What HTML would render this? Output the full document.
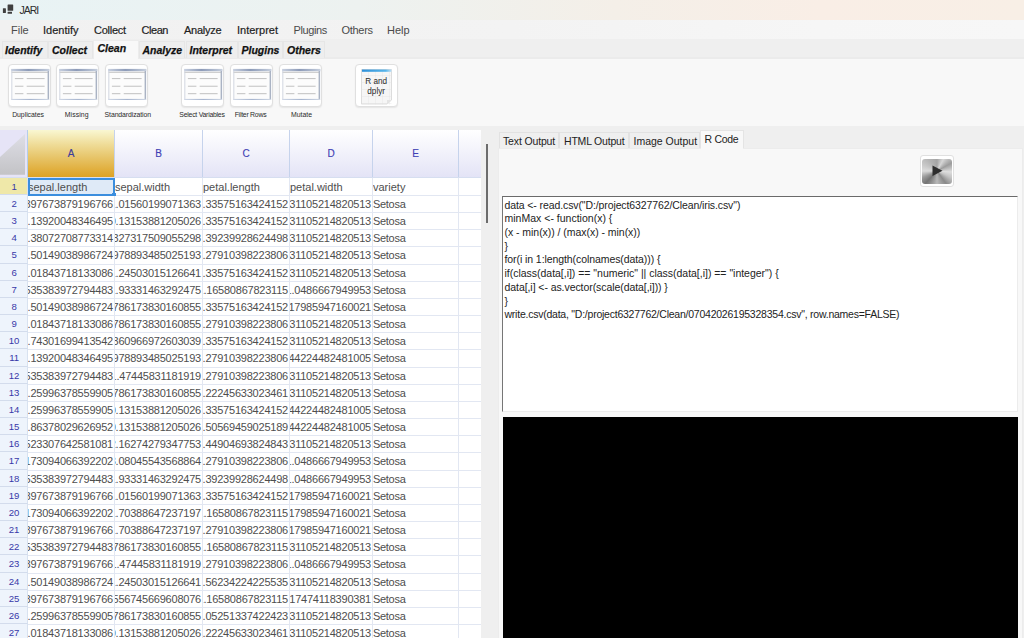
<!DOCTYPE html>
<html><head><meta charset="utf-8">
<style>
*{box-sizing:border-box}
html,body{margin:0;padding:0}
body{width:1024px;height:638px;overflow:hidden;position:relative;background:#efefef;font-family:"Liberation Sans",sans-serif;color:#222}
.a{position:absolute}
#title{left:0;top:0;width:1024px;height:20px;background:linear-gradient(90deg,#e8f3f5 0%,#edf2f0 35%,#f4efe8 60%,#f9eee6 80%,#f8efe6 100%)}
#title .t{position:absolute;left:19.5px;top:3.8px;font-size:10.5px;line-height:12px;letter-spacing:-1px;color:#2e2e2e}
#menu{left:0;top:20px;width:1024px;height:20px;background:linear-gradient(90deg,#f1f1f1,#f3f3f3 50%,#f6f6f6 80%,#f7f7f7)}
.mi{position:absolute;top:3px;font-size:11px;line-height:14px;color:#1e1e1e;-webkit-text-stroke:0.2px #1e1e1e}
.mi.lt{color:#4a4a4a;-webkit-text-stroke:0}
#tabs{left:0;top:39px;width:1024px;height:20px;background:linear-gradient(#efefef 0,#efefef 18px,#ebebeb 18px)}
.tb{position:absolute;top:2px;height:17px;background:#eeeeee;border:1px solid #e6e6e6;border-bottom:none}
.tb.sel{top:1px;height:19px;background:#f8f8f8;border-color:#ececec}
.tt{position:absolute;top:5px;-webkit-text-stroke:0.25px #111;font-size:10.5px;line-height:12px;font-weight:bold;font-style:italic;color:#111}
#ribbon{left:0;top:59px;width:1024px;height:67px;background:#f8f8f8}
.btn{position:absolute;top:5.2px;width:43px;height:42.5px;background:#fff;border:1px solid #e0e0e0;border-radius:4px;box-shadow:0 1px 1.5px rgba(0,0,0,0.08)}
.ico{position:absolute;left:2.5px;top:3.5px;width:38px;height:32px;background:linear-gradient(#fafafa,#f2f2f2);border:1px solid #c5cbd6;border-top:none}
.ico .bar{position:absolute;left:-1px;top:0;width:38px;height:3px;background:linear-gradient(90deg,#aab4c8,#8c9ab4 50%,#aab4c8)}
.ico .d{position:absolute;height:1px;background:#c8c8c8}
.lbl{position:absolute;top:51px;width:80px;text-align:center;font-size:6.9px;line-height:9px;color:#2a2a2a;letter-spacing:-0.25px;white-space:nowrap}
#tbl{left:0;top:130px;width:481px;height:508px;background:#fff;overflow:hidden}
.hl{position:absolute;left:28px;width:453px;height:1px;background:#e2e7f2}
.vl{position:absolute;top:178px;width:1px;height:460px;background:#e2e7f2}
.rn{position:absolute;left:0;width:28px;background:#eef4fc;border-bottom:1px solid #d3dcec;border-right:1px solid #d8e2f0;text-align:center;font-size:9.6px;letter-spacing:-0.2px;color:#3838a8;padding-top:2.5px;padding-left:1px;line-height:11px}
.rn.sel{background:#efe8a9}
.c{position:absolute;overflow:hidden;white-space:nowrap;font-size:11px;color:#4e4e4e;display:flex;align-items:center}
.c.r{justify-content:flex-end;padding-right:1px;letter-spacing:-0.22px}
.c.l{justify-content:flex-start;padding-left:0}
.c.s{letter-spacing:-0.3px}
.c span{flex:none;line-height:13px;padding-top:1px}
.cl{position:absolute;left:0;font-size:10.5px;line-height:13px;white-space:pre;color:#222}
.tabt{white-space:nowrap;line-height:13px}
.hdr{line-height:12px}
</style></head><body>
<div id="title" class="a">
 <svg class="a" style="left:2px;top:4px" width="13" height="11" viewBox="0 0 13 11"><rect x="5.6" y="0.4" width="5.6" height="6.4" fill="#3f3f3f" rx="0.6"/><rect x="0.9" y="4.2" width="3" height="4.7" fill="#3f3f3f" rx="0.5"/><rect x="5.6" y="7.7" width="4.4" height="2.1" fill="#3f3f3f" rx="0.4"/></svg>
 <div class="t">JARI</div>
</div>
<div id="menu" class="a">
 <div class="mi lt" style="left:11px">File</div>
 <div class="mi" style="left:43px">Identify</div>
 <div class="mi" style="left:94px;letter-spacing:-0.25px">Collect</div>
 <div class="mi" style="left:141.5px;letter-spacing:-0.45px">Clean</div>
 <div class="mi" style="left:184px;letter-spacing:-0.25px">Analyze</div>
 <div class="mi" style="left:237px">Interpret</div>
 <div class="mi lt" style="left:293.5px;letter-spacing:-0.4px">Plugins</div>
 <div class="mi lt" style="left:341.5px;letter-spacing:-0.3px">Others</div>
 <div class="mi lt" style="left:387px">Help</div>
</div>
<div id="tabs" class="a">
 <div class="tb" style="left:2px;width:45.5px"></div>
 <div class="tb" style="left:47.5px;width:45px"></div>
 <div class="tb sel" style="left:92.7px;width:46.6px"></div>
 <div class="tb" style="left:139.3px;width:46.2px"></div>
 <div class="tb" style="left:185.5px;width:52px"></div>
 <div class="tb" style="left:237.5px;width:45.5px"></div>
 <div class="tb" style="left:283px;width:42.4px"></div>
 <div class="tt" style="left:5px">Identify</div>
 <div class="tt" style="left:52px">Collect</div>
 <div class="tt" style="left:97.5px;top:3.3px">Clean</div>
 <div class="tt" style="left:142.5px">Analyze</div>
 <div class="tt" style="left:189.5px">Interpret</div>
 <div class="tt" style="left:241.5px">Plugins</div>
 <div class="tt" style="left:287px">Others</div>
</div>
<div id="ribbon" class="a">
<div class="btn" style="left:7.5px"><svg class="a" style="left:0;top:0" width="41" height="41" viewBox="0 0 41 41"><defs><linearGradient id="tb7" x1="0" x2="1"><stop offset="0" stop-color="#c9d1e0"/><stop offset="0.45" stop-color="#8d9bb8"/><stop offset="0.85" stop-color="#b4bfd2"/><stop offset="1" stop-color="#c8d0de"/></linearGradient><linearGradient id="bb7" x1="0" x2="1"><stop offset="0" stop-color="#d0d8e6"/><stop offset="0.5" stop-color="#a8b6cf"/><stop offset="1" stop-color="#cfd7e4"/></linearGradient></defs><rect x="2.5" y="4" width="37.5" height="31" fill="#fcfcfc"/><rect x="2.1" y="3.9" width="38.4" height="2.3" fill="url(#tb7)"/><rect x="2.5" y="6.8" width="37.5" height="1" fill="#c4c4c4"/><rect x="2.4" y="6" width="0.9" height="29" fill="#cdd3de"/><rect x="38.6" y="6" width="1.5" height="29" fill="#aab3c4"/><rect x="2.4" y="33.9" width="37.7" height="1.1" fill="url(#bb7)"/><g fill="#c6c6c6"><rect x="5.9" y="13" width="8.5" height="1.1"/><rect x="17.7" y="13" width="17.9" height="1.1"/><rect x="5.9" y="20.7" width="8.5" height="1.1"/><rect x="17.7" y="20.7" width="17.9" height="1.1"/><rect x="5.9" y="28.1" width="8.5" height="1.1"/><rect x="17.7" y="28.1" width="17.9" height="1.1"/></g></svg></div><div class="lbl" style="left:-12px;letter-spacing:-0.05px">Duplicates</div><div class="btn" style="left:56px"><svg class="a" style="left:0;top:0" width="41" height="41" viewBox="0 0 41 41"><defs><linearGradient id="tb56" x1="0" x2="1"><stop offset="0" stop-color="#c9d1e0"/><stop offset="0.45" stop-color="#8d9bb8"/><stop offset="0.85" stop-color="#b4bfd2"/><stop offset="1" stop-color="#c8d0de"/></linearGradient><linearGradient id="bb56" x1="0" x2="1"><stop offset="0" stop-color="#d0d8e6"/><stop offset="0.5" stop-color="#a8b6cf"/><stop offset="1" stop-color="#cfd7e4"/></linearGradient></defs><rect x="2.5" y="4" width="37.5" height="31" fill="#fcfcfc"/><rect x="2.1" y="3.9" width="38.4" height="2.3" fill="url(#tb56)"/><rect x="2.5" y="6.8" width="37.5" height="1" fill="#c4c4c4"/><rect x="2.4" y="6" width="0.9" height="29" fill="#cdd3de"/><rect x="38.6" y="6" width="1.5" height="29" fill="#aab3c4"/><rect x="2.4" y="33.9" width="37.7" height="1.1" fill="url(#bb56)"/><g fill="#c6c6c6"><rect x="5.9" y="13" width="8.5" height="1.1"/><rect x="17.7" y="13" width="17.9" height="1.1"/><rect x="5.9" y="20.7" width="8.5" height="1.1"/><rect x="17.7" y="20.7" width="17.9" height="1.1"/><rect x="5.9" y="28.1" width="8.5" height="1.1"/><rect x="17.7" y="28.1" width="17.9" height="1.1"/></g></svg></div><div class="lbl" style="left:36.7px;letter-spacing:0.05px">Missing</div><div class="btn" style="left:104.8px"><svg class="a" style="left:0;top:0" width="41" height="41" viewBox="0 0 41 41"><defs><linearGradient id="tb104" x1="0" x2="1"><stop offset="0" stop-color="#c9d1e0"/><stop offset="0.45" stop-color="#8d9bb8"/><stop offset="0.85" stop-color="#b4bfd2"/><stop offset="1" stop-color="#c8d0de"/></linearGradient><linearGradient id="bb104" x1="0" x2="1"><stop offset="0" stop-color="#d0d8e6"/><stop offset="0.5" stop-color="#a8b6cf"/><stop offset="1" stop-color="#cfd7e4"/></linearGradient></defs><rect x="2.5" y="4" width="37.5" height="31" fill="#fcfcfc"/><rect x="2.1" y="3.9" width="38.4" height="2.3" fill="url(#tb104)"/><rect x="2.5" y="6.8" width="37.5" height="1" fill="#c4c4c4"/><rect x="2.4" y="6" width="0.9" height="29" fill="#cdd3de"/><rect x="38.6" y="6" width="1.5" height="29" fill="#aab3c4"/><rect x="2.4" y="33.9" width="37.7" height="1.1" fill="url(#bb104)"/><g fill="#c6c6c6"><rect x="5.9" y="13" width="8.5" height="1.1"/><rect x="17.7" y="13" width="17.9" height="1.1"/><rect x="5.9" y="20.7" width="8.5" height="1.1"/><rect x="17.7" y="20.7" width="17.9" height="1.1"/><rect x="5.9" y="28.1" width="8.5" height="1.1"/><rect x="17.7" y="28.1" width="17.9" height="1.1"/></g></svg></div><div class="lbl" style="left:87.8px;letter-spacing:-0.1px">Standardization</div><div class="btn" style="left:181.3px"><svg class="a" style="left:0;top:0" width="41" height="41" viewBox="0 0 41 41"><defs><linearGradient id="tb181" x1="0" x2="1"><stop offset="0" stop-color="#c9d1e0"/><stop offset="0.45" stop-color="#8d9bb8"/><stop offset="0.85" stop-color="#b4bfd2"/><stop offset="1" stop-color="#c8d0de"/></linearGradient><linearGradient id="bb181" x1="0" x2="1"><stop offset="0" stop-color="#d0d8e6"/><stop offset="0.5" stop-color="#a8b6cf"/><stop offset="1" stop-color="#cfd7e4"/></linearGradient></defs><rect x="2.5" y="4" width="37.5" height="31" fill="#fcfcfc"/><rect x="2.1" y="3.9" width="38.4" height="2.3" fill="url(#tb181)"/><rect x="2.5" y="6.8" width="37.5" height="1" fill="#c4c4c4"/><rect x="2.4" y="6" width="0.9" height="29" fill="#cdd3de"/><rect x="38.6" y="6" width="1.5" height="29" fill="#aab3c4"/><rect x="2.4" y="33.9" width="37.7" height="1.1" fill="url(#bb181)"/><g fill="#c6c6c6"><rect x="5.9" y="13" width="8.5" height="1.1"/><rect x="17.7" y="13" width="17.9" height="1.1"/><rect x="5.9" y="20.7" width="8.5" height="1.1"/><rect x="17.7" y="20.7" width="17.9" height="1.1"/><rect x="5.9" y="28.1" width="8.5" height="1.1"/><rect x="17.7" y="28.1" width="17.9" height="1.1"/></g></svg></div><div class="lbl" style="left:162px;letter-spacing:-0.25px">Select Variables</div><div class="btn" style="left:230.2px"><svg class="a" style="left:0;top:0" width="41" height="41" viewBox="0 0 41 41"><defs><linearGradient id="tb230" x1="0" x2="1"><stop offset="0" stop-color="#c9d1e0"/><stop offset="0.45" stop-color="#8d9bb8"/><stop offset="0.85" stop-color="#b4bfd2"/><stop offset="1" stop-color="#c8d0de"/></linearGradient><linearGradient id="bb230" x1="0" x2="1"><stop offset="0" stop-color="#d0d8e6"/><stop offset="0.5" stop-color="#a8b6cf"/><stop offset="1" stop-color="#cfd7e4"/></linearGradient></defs><rect x="2.5" y="4" width="37.5" height="31" fill="#fcfcfc"/><rect x="2.1" y="3.9" width="38.4" height="2.3" fill="url(#tb230)"/><rect x="2.5" y="6.8" width="37.5" height="1" fill="#c4c4c4"/><rect x="2.4" y="6" width="0.9" height="29" fill="#cdd3de"/><rect x="38.6" y="6" width="1.5" height="29" fill="#aab3c4"/><rect x="2.4" y="33.9" width="37.7" height="1.1" fill="url(#bb230)"/><g fill="#c6c6c6"><rect x="5.9" y="13" width="8.5" height="1.1"/><rect x="17.7" y="13" width="17.9" height="1.1"/><rect x="5.9" y="20.7" width="8.5" height="1.1"/><rect x="17.7" y="20.7" width="17.9" height="1.1"/><rect x="5.9" y="28.1" width="8.5" height="1.1"/><rect x="17.7" y="28.1" width="17.9" height="1.1"/></g></svg></div><div class="lbl" style="left:210.5px;letter-spacing:-0.25px">Filter Rows</div><div class="btn" style="left:279px"><svg class="a" style="left:0;top:0" width="41" height="41" viewBox="0 0 41 41"><defs><linearGradient id="tb279" x1="0" x2="1"><stop offset="0" stop-color="#c9d1e0"/><stop offset="0.45" stop-color="#8d9bb8"/><stop offset="0.85" stop-color="#b4bfd2"/><stop offset="1" stop-color="#c8d0de"/></linearGradient><linearGradient id="bb279" x1="0" x2="1"><stop offset="0" stop-color="#d0d8e6"/><stop offset="0.5" stop-color="#a8b6cf"/><stop offset="1" stop-color="#cfd7e4"/></linearGradient></defs><rect x="2.5" y="4" width="37.5" height="31" fill="#fcfcfc"/><rect x="2.1" y="3.9" width="38.4" height="2.3" fill="url(#tb279)"/><rect x="2.5" y="6.8" width="37.5" height="1" fill="#c4c4c4"/><rect x="2.4" y="6" width="0.9" height="29" fill="#cdd3de"/><rect x="38.6" y="6" width="1.5" height="29" fill="#aab3c4"/><rect x="2.4" y="33.9" width="37.7" height="1.1" fill="url(#bb279)"/><g fill="#c6c6c6"><rect x="5.9" y="13" width="8.5" height="1.1"/><rect x="17.7" y="13" width="17.9" height="1.1"/><rect x="5.9" y="20.7" width="8.5" height="1.1"/><rect x="17.7" y="20.7" width="17.9" height="1.1"/><rect x="5.9" y="28.1" width="8.5" height="1.1"/><rect x="17.7" y="28.1" width="17.9" height="1.1"/></g></svg></div><div class="lbl" style="left:261.5px;letter-spacing:0px">Mutate</div>
 <div class="btn" style="left:354.5px">
  <svg class="a" style="left:5.2px;top:2.7px" width="31" height="37" viewBox="0 0 31 37">
   <defs><pattern id="g" width="7" height="7" patternUnits="userSpaceOnUse" x="1" y="1"><path d="M7 0V7M0 7H7" stroke="#e2e2e2" stroke-width="0.7" fill="none"/></pattern>
   <linearGradient id="bl" x1="0" x2="1"><stop offset="0" stop-color="#2e90d8"/><stop offset="0.8" stop-color="#56b4ea"/><stop offset="1" stop-color="#bfe0f5"/></linearGradient></defs>
   <path d="M0.5 1.5H30.5V32L26 36H0.5Z" fill="#f6f6f6" stroke="#d4d4d4" stroke-width="0.8"/>
   <rect x="0.5" y="1.5" width="30" height="35" fill="url(#g)" clip-path="none"/>
   <path d="M26 36L30.5 32H26Z" fill="#e4e4e4"/>
   <rect x="1" y="1.5" width="29.5" height="2.3" fill="url(#bl)"/>
   <text x="15.2" y="15.8" text-anchor="middle" font-family="Liberation Sans" font-size="8.2" fill="#2a2a2a">R and</text>
   <text x="15.2" y="25.6" text-anchor="middle" font-family="Liberation Sans" font-size="8.2" fill="#2a2a2a">dplyr</text>
  </svg>
 </div>
</div>
<div id="tbl" class="a">
 <div class="a" style="left:0;top:0;width:481px;height:48px;background:linear-gradient(#ffffff,#e3e3f6)"></div>
 <div class="a" style="left:28px;top:0;width:87px;height:48px;background:linear-gradient(#f9f7d2,#efdc98 30%,#e6c264 60%,#dda020)"></div>
 <div class="a" style="left:0;top:0;width:28px;height:48px;background:#e6e4f7"></div>
 <svg class="a" style="left:0;top:0" width="28" height="48"><defs><linearGradient id="tri" x1="0" y1="0" x2="0" y2="1"><stop offset="0" stop-color="#dedee6"/><stop offset="1" stop-color="#c3c3c6"/></linearGradient></defs><path d="M0 44.7H25V4L0 27Z" fill="url(#tri)"/></svg>
 <div class="a" style="left:114px;top:0;width:1px;height:48px;background:#c6d3ec"></div>
 <div class="a" style="left:202px;top:0;width:1px;height:48px;background:#c6d3ec"></div>
 <div class="a" style="left:289px;top:0;width:1px;height:48px;background:#c6d3ec"></div>
 <div class="a" style="left:372px;top:0;width:1px;height:48px;background:#c6d3ec"></div>
 <div class="a" style="left:458px;top:0;width:1px;height:48px;background:#c6d3ec"></div>
 <div class="a" style="left:27px;top:0;width:1px;height:48px;background:#b4cdea"></div>
 <div class="a hdr" style="left:28px;top:18.2px;width:86px;text-align:center;font-size:10px;color:#3c3c9c;-webkit-text-stroke:0.15px #3c3c9c">A</div>
 <div class="a hdr" style="left:115px;top:18.2px;width:87px;text-align:center;font-size:10px;color:#4040b4;-webkit-text-stroke:0.15px #4040b4">B</div>
 <div class="a hdr" style="left:203px;top:18.2px;width:86px;text-align:center;font-size:10px;color:#4040b4;-webkit-text-stroke:0.15px #4040b4">C</div>
 <div class="a hdr" style="left:290px;top:18.2px;width:82px;text-align:center;font-size:10px;color:#4040b4;-webkit-text-stroke:0.15px #4040b4">D</div>
 <div class="a hdr" style="left:373px;top:18.2px;width:85px;text-align:center;font-size:10px;color:#4040b4;-webkit-text-stroke:0.15px #4040b4">E</div>
 <div class="a" style="left:0;top:47px;width:481px;height:1px;background:#d6def0"></div>
 <div class="a" style="top:-130px;left:0">
 <div class="a" style="left:28px;top:178px;width:87px;height:17px;background:#dfeaf7"></div>
 <div class="rn sel" style="top:178px;height:17px">1</div><div class="rn" style="top:195px;height:17px">2</div><div class="rn" style="top:212px;height:17px">3</div><div class="rn" style="top:229px;height:17px">4</div><div class="rn" style="top:246px;height:18px">5</div><div class="rn" style="top:264px;height:17px">6</div><div class="rn" style="top:281px;height:17px">7</div><div class="rn" style="top:298px;height:17px">8</div><div class="rn" style="top:315px;height:17px">9</div><div class="rn" style="top:332px;height:17px">10</div><div class="rn" style="top:349px;height:18px">11</div><div class="rn" style="top:367px;height:17px">12</div><div class="rn" style="top:384px;height:17px">13</div><div class="rn" style="top:401px;height:17px">14</div><div class="rn" style="top:418px;height:17px">15</div><div class="rn" style="top:435px;height:17px">16</div><div class="rn" style="top:452px;height:18px">17</div><div class="rn" style="top:470px;height:17px">18</div><div class="rn" style="top:487px;height:17px">19</div><div class="rn" style="top:504px;height:17px">20</div><div class="rn" style="top:521px;height:17px">21</div><div class="rn" style="top:538px;height:17px">22</div><div class="rn" style="top:555px;height:18px">23</div><div class="rn" style="top:573px;height:17px">24</div><div class="rn" style="top:590px;height:17px">25</div><div class="rn" style="top:607px;height:17px">26</div><div class="rn" style="top:624px;height:17px">27</div>
 <div class="hl" style="top:195px"></div><div class="hl" style="top:212px"></div><div class="hl" style="top:229px"></div><div class="hl" style="top:246px"></div><div class="hl" style="top:264px"></div><div class="hl" style="top:281px"></div><div class="hl" style="top:298px"></div><div class="hl" style="top:315px"></div><div class="hl" style="top:332px"></div><div class="hl" style="top:349px"></div><div class="hl" style="top:367px"></div><div class="hl" style="top:384px"></div><div class="hl" style="top:401px"></div><div class="hl" style="top:418px"></div><div class="hl" style="top:435px"></div><div class="hl" style="top:452px"></div><div class="hl" style="top:470px"></div><div class="hl" style="top:487px"></div><div class="hl" style="top:504px"></div><div class="hl" style="top:521px"></div><div class="hl" style="top:538px"></div><div class="hl" style="top:555px"></div><div class="hl" style="top:573px"></div><div class="hl" style="top:590px"></div><div class="hl" style="top:607px"></div><div class="hl" style="top:624px"></div><div class="hl" style="top:641px"></div><div class="vl" style="left:114px"></div><div class="vl" style="left:202px"></div><div class="vl" style="left:289px"></div><div class="vl" style="left:372px"></div><div class="vl" style="left:458px"></div>
 <div class="c l" style="top:178px;left:28px;width:86px;height:17px"><span>sepal.length</span></div><div class="c l" style="top:178px;left:115px;width:87px;height:17px"><span>sepal.width</span></div><div class="c l" style="top:178px;left:203px;width:86px;height:17px"><span>petal.length</span></div><div class="c l" style="top:178px;left:290px;width:82px;height:17px"><span>petal.width</span></div><div class="c l" style="top:178px;left:373px;width:85px;height:17px"><span>variety</span></div><div class="c r" style="top:195px;left:28px;width:86px;height:17px"><span>-0.897673879196766</span></div><div class="c r" style="top:195px;left:115px;width:87px;height:17px"><span>1.01560199071363</span></div><div class="c r" style="top:195px;left:203px;width:86px;height:17px"><span>-1.33575163424152</span></div><div class="c r" style="top:195px;left:290px;width:82px;height:17px"><span>-1.31105214820513</span></div><div class="c l s" style="top:195px;left:373px;width:85px;height:17px"><span>Setosa</span></div><div class="c r" style="top:212px;left:28px;width:86px;height:17px"><span>-1.13920048346495</span></div><div class="c r" style="top:212px;left:115px;width:87px;height:17px"><span>-0.13153881205026</span></div><div class="c r" style="top:212px;left:203px;width:86px;height:17px"><span>-1.33575163424152</span></div><div class="c r" style="top:212px;left:290px;width:82px;height:17px"><span>-1.31105214820513</span></div><div class="c l s" style="top:212px;left:373px;width:85px;height:17px"><span>Setosa</span></div><div class="c r" style="top:229px;left:28px;width:86px;height:17px"><span>-1.38072708773314</span></div><div class="c r" style="top:229px;left:115px;width:87px;height:17px"><span>0.327317509055298</span></div><div class="c r" style="top:229px;left:203px;width:86px;height:17px"><span>-1.39239928624498</span></div><div class="c r" style="top:229px;left:290px;width:82px;height:17px"><span>-1.31105214820513</span></div><div class="c l s" style="top:229px;left:373px;width:85px;height:17px"><span>Setosa</span></div><div class="c r" style="top:246px;left:28px;width:86px;height:18px"><span>-1.50149038986724</span></div><div class="c r" style="top:246px;left:115px;width:87px;height:18px"><span>0.0978893485025193</span></div><div class="c r" style="top:246px;left:203px;width:86px;height:18px"><span>-1.27910398223806</span></div><div class="c r" style="top:246px;left:290px;width:82px;height:18px"><span>-1.31105214820513</span></div><div class="c l s" style="top:246px;left:373px;width:85px;height:18px"><span>Setosa</span></div><div class="c r" style="top:264px;left:28px;width:86px;height:17px"><span>-1.01843718133086</span></div><div class="c r" style="top:264px;left:115px;width:87px;height:17px"><span>1.24503015126641</span></div><div class="c r" style="top:264px;left:203px;width:86px;height:17px"><span>-1.33575163424152</span></div><div class="c r" style="top:264px;left:290px;width:82px;height:17px"><span>-1.31105214820513</span></div><div class="c l s" style="top:264px;left:373px;width:85px;height:17px"><span>Setosa</span></div><div class="c r" style="top:281px;left:28px;width:86px;height:17px"><span>-0.535383972794483</span></div><div class="c r" style="top:281px;left:115px;width:87px;height:17px"><span>1.93331463292475</span></div><div class="c r" style="top:281px;left:203px;width:86px;height:17px"><span>-1.16580867823115</span></div><div class="c r" style="top:281px;left:290px;width:82px;height:17px"><span>-1.0486667949953</span></div><div class="c l s" style="top:281px;left:373px;width:85px;height:17px"><span>Setosa</span></div><div class="c r" style="top:298px;left:28px;width:86px;height:17px"><span>-1.50149038986724</span></div><div class="c r" style="top:298px;left:115px;width:87px;height:17px"><span>0.786173830160855</span></div><div class="c r" style="top:298px;left:203px;width:86px;height:17px"><span>-1.33575163424152</span></div><div class="c r" style="top:298px;left:290px;width:82px;height:17px"><span>-1.17985947160021</span></div><div class="c l s" style="top:298px;left:373px;width:85px;height:17px"><span>Setosa</span></div><div class="c r" style="top:315px;left:28px;width:86px;height:17px"><span>-1.01843718133086</span></div><div class="c r" style="top:315px;left:115px;width:87px;height:17px"><span>0.786173830160855</span></div><div class="c r" style="top:315px;left:203px;width:86px;height:17px"><span>-1.27910398223806</span></div><div class="c r" style="top:315px;left:290px;width:82px;height:17px"><span>-1.31105214820513</span></div><div class="c l s" style="top:315px;left:373px;width:85px;height:17px"><span>Setosa</span></div><div class="c r" style="top:332px;left:28px;width:86px;height:17px"><span>-1.74301699413542</span></div><div class="c r" style="top:332px;left:115px;width:87px;height:17px"><span>-0.360966972603039</span></div><div class="c r" style="top:332px;left:203px;width:86px;height:17px"><span>-1.33575163424152</span></div><div class="c r" style="top:332px;left:290px;width:82px;height:17px"><span>-1.31105214820513</span></div><div class="c l s" style="top:332px;left:373px;width:85px;height:17px"><span>Setosa</span></div><div class="c r" style="top:349px;left:28px;width:86px;height:18px"><span>-1.13920048346495</span></div><div class="c r" style="top:349px;left:115px;width:87px;height:18px"><span>0.0978893485025193</span></div><div class="c r" style="top:349px;left:203px;width:86px;height:18px"><span>-1.27910398223806</span></div><div class="c r" style="top:349px;left:290px;width:82px;height:18px"><span>-1.44224482481005</span></div><div class="c l s" style="top:349px;left:373px;width:85px;height:18px"><span>Setosa</span></div><div class="c r" style="top:367px;left:28px;width:86px;height:17px"><span>-0.535383972794483</span></div><div class="c r" style="top:367px;left:115px;width:87px;height:17px"><span>1.47445831181919</span></div><div class="c r" style="top:367px;left:203px;width:86px;height:17px"><span>-1.27910398223806</span></div><div class="c r" style="top:367px;left:290px;width:82px;height:17px"><span>-1.31105214820513</span></div><div class="c l s" style="top:367px;left:373px;width:85px;height:17px"><span>Setosa</span></div><div class="c r" style="top:384px;left:28px;width:86px;height:17px"><span>-1.25996378559905</span></div><div class="c r" style="top:384px;left:115px;width:87px;height:17px"><span>0.786173830160855</span></div><div class="c r" style="top:384px;left:203px;width:86px;height:17px"><span>-1.22245633023461</span></div><div class="c r" style="top:384px;left:290px;width:82px;height:17px"><span>-1.31105214820513</span></div><div class="c l s" style="top:384px;left:373px;width:85px;height:17px"><span>Setosa</span></div><div class="c r" style="top:401px;left:28px;width:86px;height:17px"><span>-1.25996378559905</span></div><div class="c r" style="top:401px;left:115px;width:87px;height:17px"><span>-0.13153881205026</span></div><div class="c r" style="top:401px;left:203px;width:86px;height:17px"><span>-1.33575163424152</span></div><div class="c r" style="top:401px;left:290px;width:82px;height:17px"><span>-1.44224482481005</span></div><div class="c l s" style="top:401px;left:373px;width:85px;height:17px"><span>Setosa</span></div><div class="c r" style="top:418px;left:28px;width:86px;height:17px"><span>-1.86378029626952</span></div><div class="c r" style="top:418px;left:115px;width:87px;height:17px"><span>-0.13153881205026</span></div><div class="c r" style="top:418px;left:203px;width:86px;height:17px"><span>-1.50569459025189</span></div><div class="c r" style="top:418px;left:290px;width:82px;height:17px"><span>-1.44224482481005</span></div><div class="c l s" style="top:418px;left:373px;width:85px;height:17px"><span>Setosa</span></div><div class="c r" style="top:435px;left:28px;width:86px;height:17px"><span>-0.0523307642581081</span></div><div class="c r" style="top:435px;left:115px;width:87px;height:17px"><span>2.16274279347753</span></div><div class="c r" style="top:435px;left:203px;width:86px;height:17px"><span>-1.44904693824843</span></div><div class="c r" style="top:435px;left:290px;width:82px;height:17px"><span>-1.31105214820513</span></div><div class="c l s" style="top:435px;left:373px;width:85px;height:17px"><span>Setosa</span></div><div class="c r" style="top:452px;left:28px;width:86px;height:18px"><span>-0.173094066392202</span></div><div class="c r" style="top:452px;left:115px;width:87px;height:18px"><span>3.08045543568864</span></div><div class="c r" style="top:452px;left:203px;width:86px;height:18px"><span>-1.27910398223806</span></div><div class="c r" style="top:452px;left:290px;width:82px;height:18px"><span>-1.0486667949953</span></div><div class="c l s" style="top:452px;left:373px;width:85px;height:18px"><span>Setosa</span></div><div class="c r" style="top:470px;left:28px;width:86px;height:17px"><span>-0.535383972794483</span></div><div class="c r" style="top:470px;left:115px;width:87px;height:17px"><span>1.93331463292475</span></div><div class="c r" style="top:470px;left:203px;width:86px;height:17px"><span>-1.39239928624498</span></div><div class="c r" style="top:470px;left:290px;width:82px;height:17px"><span>-1.0486667949953</span></div><div class="c l s" style="top:470px;left:373px;width:85px;height:17px"><span>Setosa</span></div><div class="c r" style="top:487px;left:28px;width:86px;height:17px"><span>-0.897673879196766</span></div><div class="c r" style="top:487px;left:115px;width:87px;height:17px"><span>1.01560199071363</span></div><div class="c r" style="top:487px;left:203px;width:86px;height:17px"><span>-1.33575163424152</span></div><div class="c r" style="top:487px;left:290px;width:82px;height:17px"><span>-1.17985947160021</span></div><div class="c l s" style="top:487px;left:373px;width:85px;height:17px"><span>Setosa</span></div><div class="c r" style="top:504px;left:28px;width:86px;height:17px"><span>-0.173094066392202</span></div><div class="c r" style="top:504px;left:115px;width:87px;height:17px"><span>1.70388647237197</span></div><div class="c r" style="top:504px;left:203px;width:86px;height:17px"><span>-1.16580867823115</span></div><div class="c r" style="top:504px;left:290px;width:82px;height:17px"><span>-1.17985947160021</span></div><div class="c l s" style="top:504px;left:373px;width:85px;height:17px"><span>Setosa</span></div><div class="c r" style="top:521px;left:28px;width:86px;height:17px"><span>-0.897673879196766</span></div><div class="c r" style="top:521px;left:115px;width:87px;height:17px"><span>1.70388647237197</span></div><div class="c r" style="top:521px;left:203px;width:86px;height:17px"><span>-1.27910398223806</span></div><div class="c r" style="top:521px;left:290px;width:82px;height:17px"><span>-1.17985947160021</span></div><div class="c l s" style="top:521px;left:373px;width:85px;height:17px"><span>Setosa</span></div><div class="c r" style="top:538px;left:28px;width:86px;height:17px"><span>-0.535383972794483</span></div><div class="c r" style="top:538px;left:115px;width:87px;height:17px"><span>0.786173830160855</span></div><div class="c r" style="top:538px;left:203px;width:86px;height:17px"><span>-1.16580867823115</span></div><div class="c r" style="top:538px;left:290px;width:82px;height:17px"><span>-1.31105214820513</span></div><div class="c l s" style="top:538px;left:373px;width:85px;height:17px"><span>Setosa</span></div><div class="c r" style="top:555px;left:28px;width:86px;height:18px"><span>-0.897673879196766</span></div><div class="c r" style="top:555px;left:115px;width:87px;height:18px"><span>1.47445831181919</span></div><div class="c r" style="top:555px;left:203px;width:86px;height:18px"><span>-1.27910398223806</span></div><div class="c r" style="top:555px;left:290px;width:82px;height:18px"><span>-1.0486667949953</span></div><div class="c l s" style="top:555px;left:373px;width:85px;height:18px"><span>Setosa</span></div><div class="c r" style="top:573px;left:28px;width:86px;height:17px"><span>-1.50149038986724</span></div><div class="c r" style="top:573px;left:115px;width:87px;height:17px"><span>1.24503015126641</span></div><div class="c r" style="top:573px;left:203px;width:86px;height:17px"><span>-1.56234224225535</span></div><div class="c r" style="top:573px;left:290px;width:82px;height:17px"><span>-1.31105214820513</span></div><div class="c l s" style="top:573px;left:373px;width:85px;height:17px"><span>Setosa</span></div><div class="c r" style="top:590px;left:28px;width:86px;height:17px"><span>-0.897673879196766</span></div><div class="c r" style="top:590px;left:115px;width:87px;height:17px"><span>0.556745669608076</span></div><div class="c r" style="top:590px;left:203px;width:86px;height:17px"><span>-1.16580867823115</span></div><div class="c r" style="top:590px;left:290px;width:82px;height:17px"><span>-0.917474118390381</span></div><div class="c l s" style="top:590px;left:373px;width:85px;height:17px"><span>Setosa</span></div><div class="c r" style="top:607px;left:28px;width:86px;height:17px"><span>-1.25996378559905</span></div><div class="c r" style="top:607px;left:115px;width:87px;height:17px"><span>0.786173830160855</span></div><div class="c r" style="top:607px;left:203px;width:86px;height:17px"><span>-1.05251337422423</span></div><div class="c r" style="top:607px;left:290px;width:82px;height:17px"><span>-1.31105214820513</span></div><div class="c l s" style="top:607px;left:373px;width:85px;height:17px"><span>Setosa</span></div><div class="c r" style="top:624px;left:28px;width:86px;height:17px"><span>-1.01843718133086</span></div><div class="c r" style="top:624px;left:115px;width:87px;height:17px"><span>-0.13153881205026</span></div><div class="c r" style="top:624px;left:203px;width:86px;height:17px"><span>-1.22245633023461</span></div><div class="c r" style="top:624px;left:290px;width:82px;height:17px"><span>-1.31105214820513</span></div><div class="c l s" style="top:624px;left:373px;width:85px;height:17px"><span>Setosa</span></div>
 </div>
 <div class="a" style="left:28px;top:48px;width:87px;height:17.5px;border:2px solid #3b8ede"></div><div class="a" style="left:112px;top:63px;width:4px;height:3px;background:#3b8ede"></div>
</div>
<div class="a" style="left:486px;top:144px;width:2.3px;height:79px;background:#6c6c6c"></div>
<div id="rp" class="a" style="left:498px;top:130px;width:526px;height:508px">
 <div class="a" style="left:0.5px;top:1.5px;width:60.5px;height:17px;background:#efefef;border:1px solid #e2e2e2;border-bottom:none"></div>
 <div class="a" style="left:61px;top:1.5px;width:70px;height:17px;background:#efefef;border:1px solid #e2e2e2;border-bottom:none"></div>
 <div class="a" style="left:131px;top:1.5px;width:71px;height:17px;background:#efefef;border:1px solid #e2e2e2;border-bottom:none"></div>
 <div class="a" style="left:202px;top:0px;width:43.5px;height:19px;background:#f8f8f8;border:1px solid #e4e4e4;border-bottom:none"></div>
 <div class="a" style="left:0;top:18px;width:525px;height:490px;background:#f8f8f8;border:1px solid #ececec;border-bottom:none"></div>
 <div class="a" style="left:202.5px;top:17px;width:42.5px;height:3px;background:#f8f8f8"></div>
 <div class="a tabt" style="left:5px;top:4.5px;font-size:10.5px;color:#222;letter-spacing:-0.15px">Text Output</div>
 <div class="a tabt" style="left:66px;top:4.5px;font-size:10.5px;color:#222;letter-spacing:-0.2px">HTML Output</div>
 <div class="a tabt" style="left:135.5px;top:4.5px;font-size:10.5px;color:#222">Image Output</div>
 <div class="a tabt" style="left:206.5px;top:2.5px;font-size:10.5px;color:#222;letter-spacing:-0.3px">R Code</div>
 <div class="a" style="left:421.5px;top:25px;width:34.5px;height:31.5px;background:#fff;border:1px solid #e0e0e0;border-radius:3px"></div>
 <div class="a" style="left:424px;top:28.5px;width:29.5px;height:25.5px;border-radius:3px;background:conic-gradient(from 0deg at 50% 48%,#a4a4a4,#d6d6d6 8%,#9c9c9c 17%,#dedede 26%,#c4c4c4 32%,#8a8a8a 40%,#b8b8b8 50%,#747474 62%,#9a9a9a 68%,#dcdcdc 75%,#c8c8c8 82%,#b4b4b4 90%,#a4a4a4)"></div>
 <svg class="a" style="left:434px;top:35px" width="12" height="12"><path d="M0.5 0.5L10.5 5.8L0.5 11Z" fill="#2e2e2e"/></svg>
 <div class="a" style="left:4px;top:66px;width:516px;height:216px;background:#fff;border-top:1.6px solid #6a6a6a;border-left:1.8px solid #767676;border-right:1px solid #ececec;border-bottom:1px solid #ececec;overflow:hidden">
  <div class="a" style="left:1.5px;top:1.5px;width:510px;height:200px"><div class="cl" style="top:0.00px;letter-spacing:-0.104px">data &lt;- read.csv("D:/project6327762/Clean/iris.csv")</div><div class="cl" style="top:13.72px;letter-spacing:0.009px">minMax &lt;- function(x) {</div><div class="cl" style="top:27.44px;letter-spacing:-0.041px">(x - min(x)) / (max(x) - min(x))</div><div class="cl" style="top:41.16px;letter-spacing:0px">}</div><div class="cl" style="top:54.88px;letter-spacing:-0.08px">for(i in 1:length(colnames(data))) {</div><div class="cl" style="top:68.60px;letter-spacing:-0.019px">if(class(data[,i]) == "numeric" || class(data[,i]) == "integer") {</div><div class="cl" style="top:82.32px;letter-spacing:-0.068px">data[,i] &lt;- as.vector(scale(data[,i])) }</div><div class="cl" style="top:96.04px;letter-spacing:0px">}</div><div class="cl" style="top:109.76px;letter-spacing:-0.236px">write.csv(data, "D:/project6327762/Clean/07042026195328354.csv", row.names=FALSE)</div></div>
 </div>
 <div class="a" style="left:4.5px;top:286.5px;width:515.5px;height:222px;background:#000"></div>
</div>
</body></html>
